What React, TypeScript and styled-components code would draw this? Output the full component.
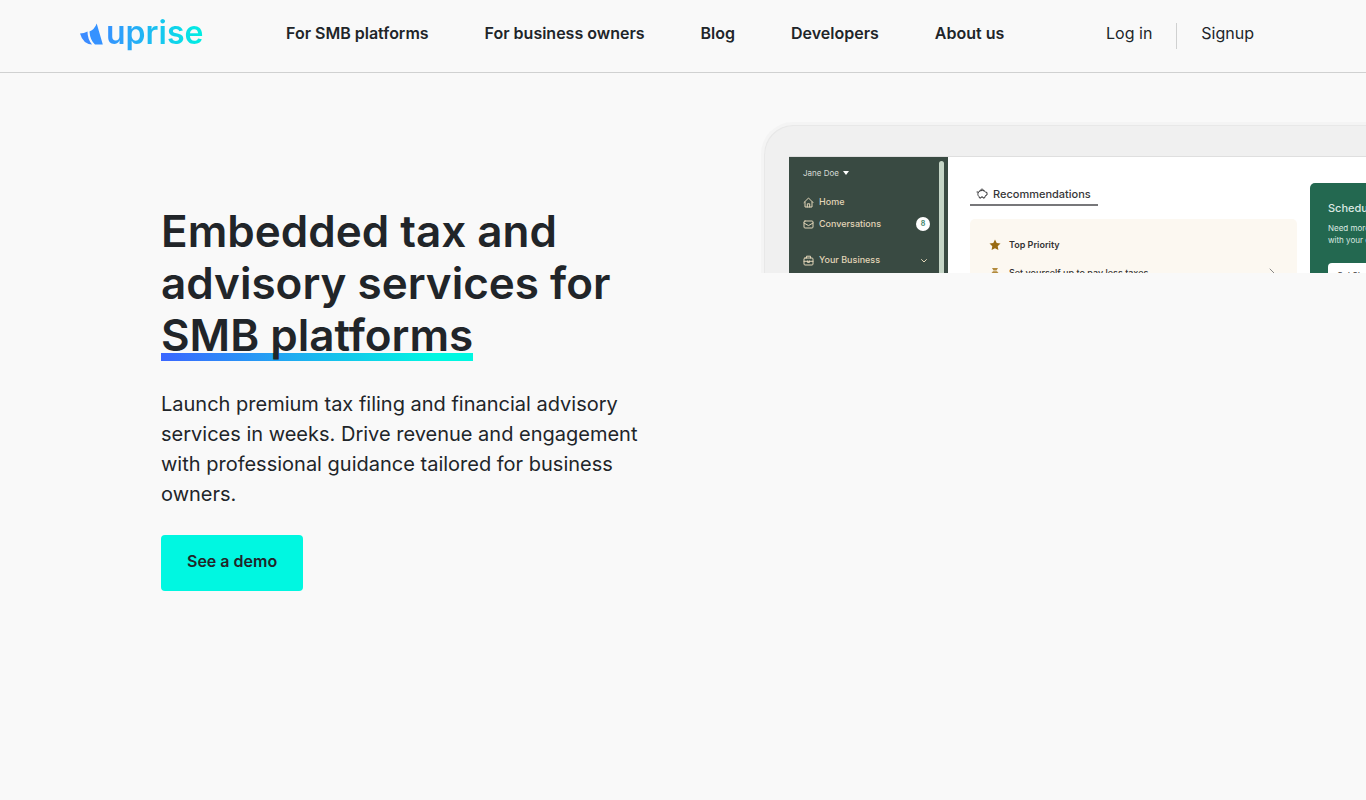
import React from 'react';
import styled, { createGlobalStyle } from 'styled-components';

const GlobalStyle = createGlobalStyle`
  *, *::before, *::after { box-sizing: border-box; }
  body {
    margin: 0;
    background: #f9f9f9;
    color: #212529;
    font-family: Inter, "Open Sans", sans-serif;
    font-size: 16px;
    line-height: 24px;
    overflow-x: hidden;
  }
  a { color: inherit; text-decoration: none; }
  h1, h2, h3, p { margin: 0; padding: 0; }
`;

const Header = styled.header`
  display: flex;
  align-items: center;
  height: 73px;
  padding: 0 112px 6px 80px;
  border-bottom: 1px solid #d0d1d1;
`;

const Logo = styled.a`
  display: flex;
  align-items: center;
  width: 206px;
  flex: none;
`;

const LogoMark = styled.svg`
  width: 24px;
  height: 24px;
  margin-right: 2px;
`;

const LogoWord = styled.span`
  font-size: 32px;
  line-height: 40px;
  font-weight: 600;
  color: transparent;
  background: linear-gradient(90deg, #3592ff, #00efe2);
  background-clip: text;
`;

const Nav = styled.nav`
  display: flex;
  flex: 1;
  gap: 56px;
  font-weight: 600;
  white-space: nowrap;
`;

const Account = styled.div`
  display: flex;
  flex: none;
  gap: 24px;
`;

const Divider = styled.span`
  align-self: flex-end;
  width: 1px;
  height: 26px;
  margin: 2px 0 -4px;
  background: #d0d1d1;
`;

const Hero = styled.main`
  display: grid;
  grid-template-columns: minmax(0, 1fr) minmax(0, 605px);
  align-items: start;
  padding-top: 49px;
`;

const Copy = styled.section`
  padding: 83px 96px 48px 161px;
`;

const Title = styled.h1`
  font-size: 44px;
  line-height: 52px;
  font-weight: 600;
  white-space: nowrap;
`;

const Underlined = styled.span`
  background: linear-gradient(90deg, #3b66ff, #00f7e1 88%) left bottom 1px / 100% 8px no-repeat;
`;

const Lead = styled.p`
  margin: 28px 0 26px;
  font-size: 20px;
  line-height: 30px;
  white-space: nowrap;
`;

const DemoButton = styled.button`
  height: 56px;
  padding: 0 26px 4px;
  border: 0;
  border-radius: 4px;
  background: #00f7e1;
  color: #212529;
  font: inherit;
  font-weight: 600;
`;

const Preview = styled.section`
  height: 151px;
  overflow: hidden;
`;

const Device = styled.div`
  width: 840px;
  height: 520px;
  padding: 32px 28px 32px 25px;
  border: 3px solid #f4f4f4;
  border-right: 0;
  border-radius: 32px;
  background: #f0f0f0;
  box-shadow: inset 1px 1px 0 #e8e8e8;
`;

const Screen = styled.div`
  display: flex;
  height: 440px;
  background: #fff;
  box-shadow: 0 -1px 0 #dfdfdf;
`;

const Sidebar = styled.div`
  display: flex;
  flex: none;
  width: 159px;
  padding: 4px 4px 0 14px;
  background: #394a42;
  color: #e2d5b8;
  font-size: 9px;
  line-height: 12px;
`;

const SideMenu = styled.div`
  flex: 1;
  padding-right: 9px;
`;

const Scrollbar = styled.div`
  width: 5px;
  border-radius: 3px;
  background: #c5d5c6;
`;

const User = styled.div`
  display: flex;
  align-items: center;
  gap: 4px;
  margin: 6px 0 12px;
  color: #d5dad5;
  font-size: 8px;
`;

const SideItem = styled.a<{ $spaced?: boolean }>`
  display: flex;
  align-items: center;
  gap: 5px;
  height: 22px;
  margin-top: ${({ $spaced }) => ($spaced ? '14px' : '0')};
  font-weight: 500;
  > :last-child:not(span) { margin-left: auto; }
`;

const Count = styled.b`
  width: 14px;
  height: 14px;
  border-radius: 50%;
  background: #fff;
  color: #4c8a72;
  font-size: 7px;
  line-height: 14px;
  text-align: center;
`;

const Icon = styled.svg`
  flex: none;
  fill: none;
  stroke: currentColor;
  stroke-linecap: round;
  stroke-linejoin: round;
`;

const Content = styled.div`
  display: grid;
  grid-template-columns: 327px 200px;
  gap: 13px;
  align-items: start;
  padding: 26px 0 0 22px;
`;

const Tab = styled.h2`
  display: flex;
  align-items: center;
  gap: 5px;
  width: 128px;
  height: 23px;
  padding-left: 6px;
  border-bottom: 2px solid #77777a;
  color: #363638;
  font-size: 11px;
  line-height: 14px;
  font-weight: 500;
`;

const Priorities = styled.div`
  display: grid;
  grid-template-columns: 12px 1fr 12px;
  column-gap: 8px;
  row-gap: 15px;
  align-items: center;
  align-content: start;
  height: 240px;
  margin-top: 13px;
  padding: 19px;
  border-radius: 5px;
  background: #fcf8f1;
  color: #333;
  font-size: 9px;
  line-height: 13px;
  font-weight: 500;
`;

const PriorityTitle = styled.h3`
  grid-column: 2 / 4;
  font-size: 9px;
  font-weight: 600;
`;

const Schedule = styled.div`
  height: 260px;
  padding: 18px;
  border-radius: 5px;
  background: #236850;
  color: #dce9e2;
  font-size: 8px;
  line-height: 12px;
  white-space: nowrap;
`;

const ScheduleTitle = styled.h3`
  margin-bottom: 7px;
  font-size: 11px;
  line-height: 14px;
  font-weight: 500;
`;

const StartButton = styled.button`
  display: block;
  margin-top: 17px;
  height: 24px;
  padding: 0 9px;
  border: 0;
  border-radius: 4px;
  background: #fff;
  color: #444;
  font: inherit;
  font-weight: 500;
`;

const links = ['For SMB platforms', 'For business owners', 'Blog', 'Developers', 'About us'];

export default function App() {
  return (
    <>
      <GlobalStyle />
      <Header>
        <Logo href="#" aria-label="uprise">
          <LogoMark viewBox="0 0 24 24" aria-hidden="true">
            <path d="M0 12.500Q4 12.500 7.500 10.500Q7.500 18 12 23.500Q3 23 0 12.500Z" fill="#3c8cff" />
            <path d="M9.500 10.500Q14.500 8.500 16.700 2.500L22.800 23.500H15Q10 19 9.500 10.500Z" fill="#3592ff" />
          </LogoMark>
          <LogoWord>uprise</LogoWord>
        </Logo>
        <Nav>
          {links.map((label) => (
            <a href="#" key={label}>{label}</a>
          ))}
        </Nav>
        <Account>
          <a href="#">Log in</a>
          <Divider />
          <a href="#">Signup</a>
        </Account>
      </Header>
      <Hero>
        <Copy>
          <Title>
            Embedded tax and<br />advisory services for<br />
            <Underlined>SMB platforms</Underlined>
          </Title>
          <Lead>
            Launch premium tax filing and financial advisory<br />
            services in weeks. Drive revenue and engagement<br />
            with professional guidance tailored for business<br />
            owners.
          </Lead>
          <DemoButton type="button">See a demo</DemoButton>
        </Copy>
        <Preview>
          <Device>
            <Screen>
              <Sidebar>
                <SideMenu>
                  <User>
                    Jane Doe
                    <svg width="6" height="4" viewBox="0 0 6 4"><path d="M0 0h6L3 4z" fill="#fff" /></svg>
                  </User>
                  <SideItem href="#">
                    <Icon width="11" height="11" viewBox="0 0 11 11">
                      <path d="M1 5.5 5.5 1 10 5.5M2 5v5h7V5M4.3 10V6.8h2.4V10" />
                    </Icon>
                    <span>Home</span>
                  </SideItem>
                  <SideItem href="#">
                    <Icon width="11" height="11" viewBox="0 0 11 11">
                      <rect x="1" y="2" width="9" height="7" rx="1" />
                      <path d="m1 4 4.5 2.6L10 4" />
                    </Icon>
                    <span>Conversations</span>
                    <Count>8</Count>
                  </SideItem>
                  <SideItem href="#" $spaced>
                    <Icon width="11" height="11" viewBox="0 0 11 11">
                      <rect x="1" y="3" width="9" height="7" rx="1" />
                      <path d="M3.5 3V1.2h4V3M1 6.3h9M4.5 6v1.4h2V6" />
                    </Icon>
                    <span>Your Business</span>
                    <Icon width="12" height="8" viewBox="0 0 12 8">
                      <path d="m3.5 3.500 2.5 2.5L8.500 3.500" />
                    </Icon>
                  </SideItem>
                </SideMenu>
                <Scrollbar />
              </Sidebar>
              <Content>
                <div>
                  <Tab>
                    <Icon width="12" height="12" viewBox="0 0 12 12">
                      <path d="M3 3.500C5 2 8 2 9.500 4l1.500.5v2.500l-1.500.5L8.500 10H7V9H5v1H3.500L3 8.500C1.700 7.500 1.500 5.500 2.500 4L1 4M4 2.800C4.500.5 7.500.5 8 2.800" />
                    </Icon>
                    Recommendations
                  </Tab>
                  <Priorities>
                    <svg width="12" height="12" viewBox="0 0 12 12">
                      <path d="m6 .5 1.700 3.500 3.800.5-2.800 2.700.7 3.800L6 9.200 2.600 11l.7-3.800L.5 4.500 4.300 4z" fill="#996b12" />
                    </svg>
                    <PriorityTitle>Top Priority</PriorityTitle>
                    <svg width="12" height="12" viewBox="0 0 12 12">
                      <path d="M3 1h6L7.500 3.500h-3z M4 4.200h4c2 2 3 4 2 7H2c-1-3 0-5 2-7z" fill="#b28a3c" />
                    </svg>
                    <span>Set yourself up to pay less taxes</span>
                    <Icon width="12" height="12" viewBox="0 0 12 12">
                      <path d="m4 2 4 4-4 4" stroke="#888" />
                    </Icon>
                  </Priorities>
                </div>
                <Schedule>
                  <ScheduleTitle>Schedule a call</ScheduleTitle>
                  <p>Need more help? Book a call<br />with your expert advisor</p>
                  <StartButton type="button">Get Started</StartButton>
                </Schedule>
              </Content>
            </Screen>
          </Device>
        </Preview>
      </Hero>
    </>
  );
}
